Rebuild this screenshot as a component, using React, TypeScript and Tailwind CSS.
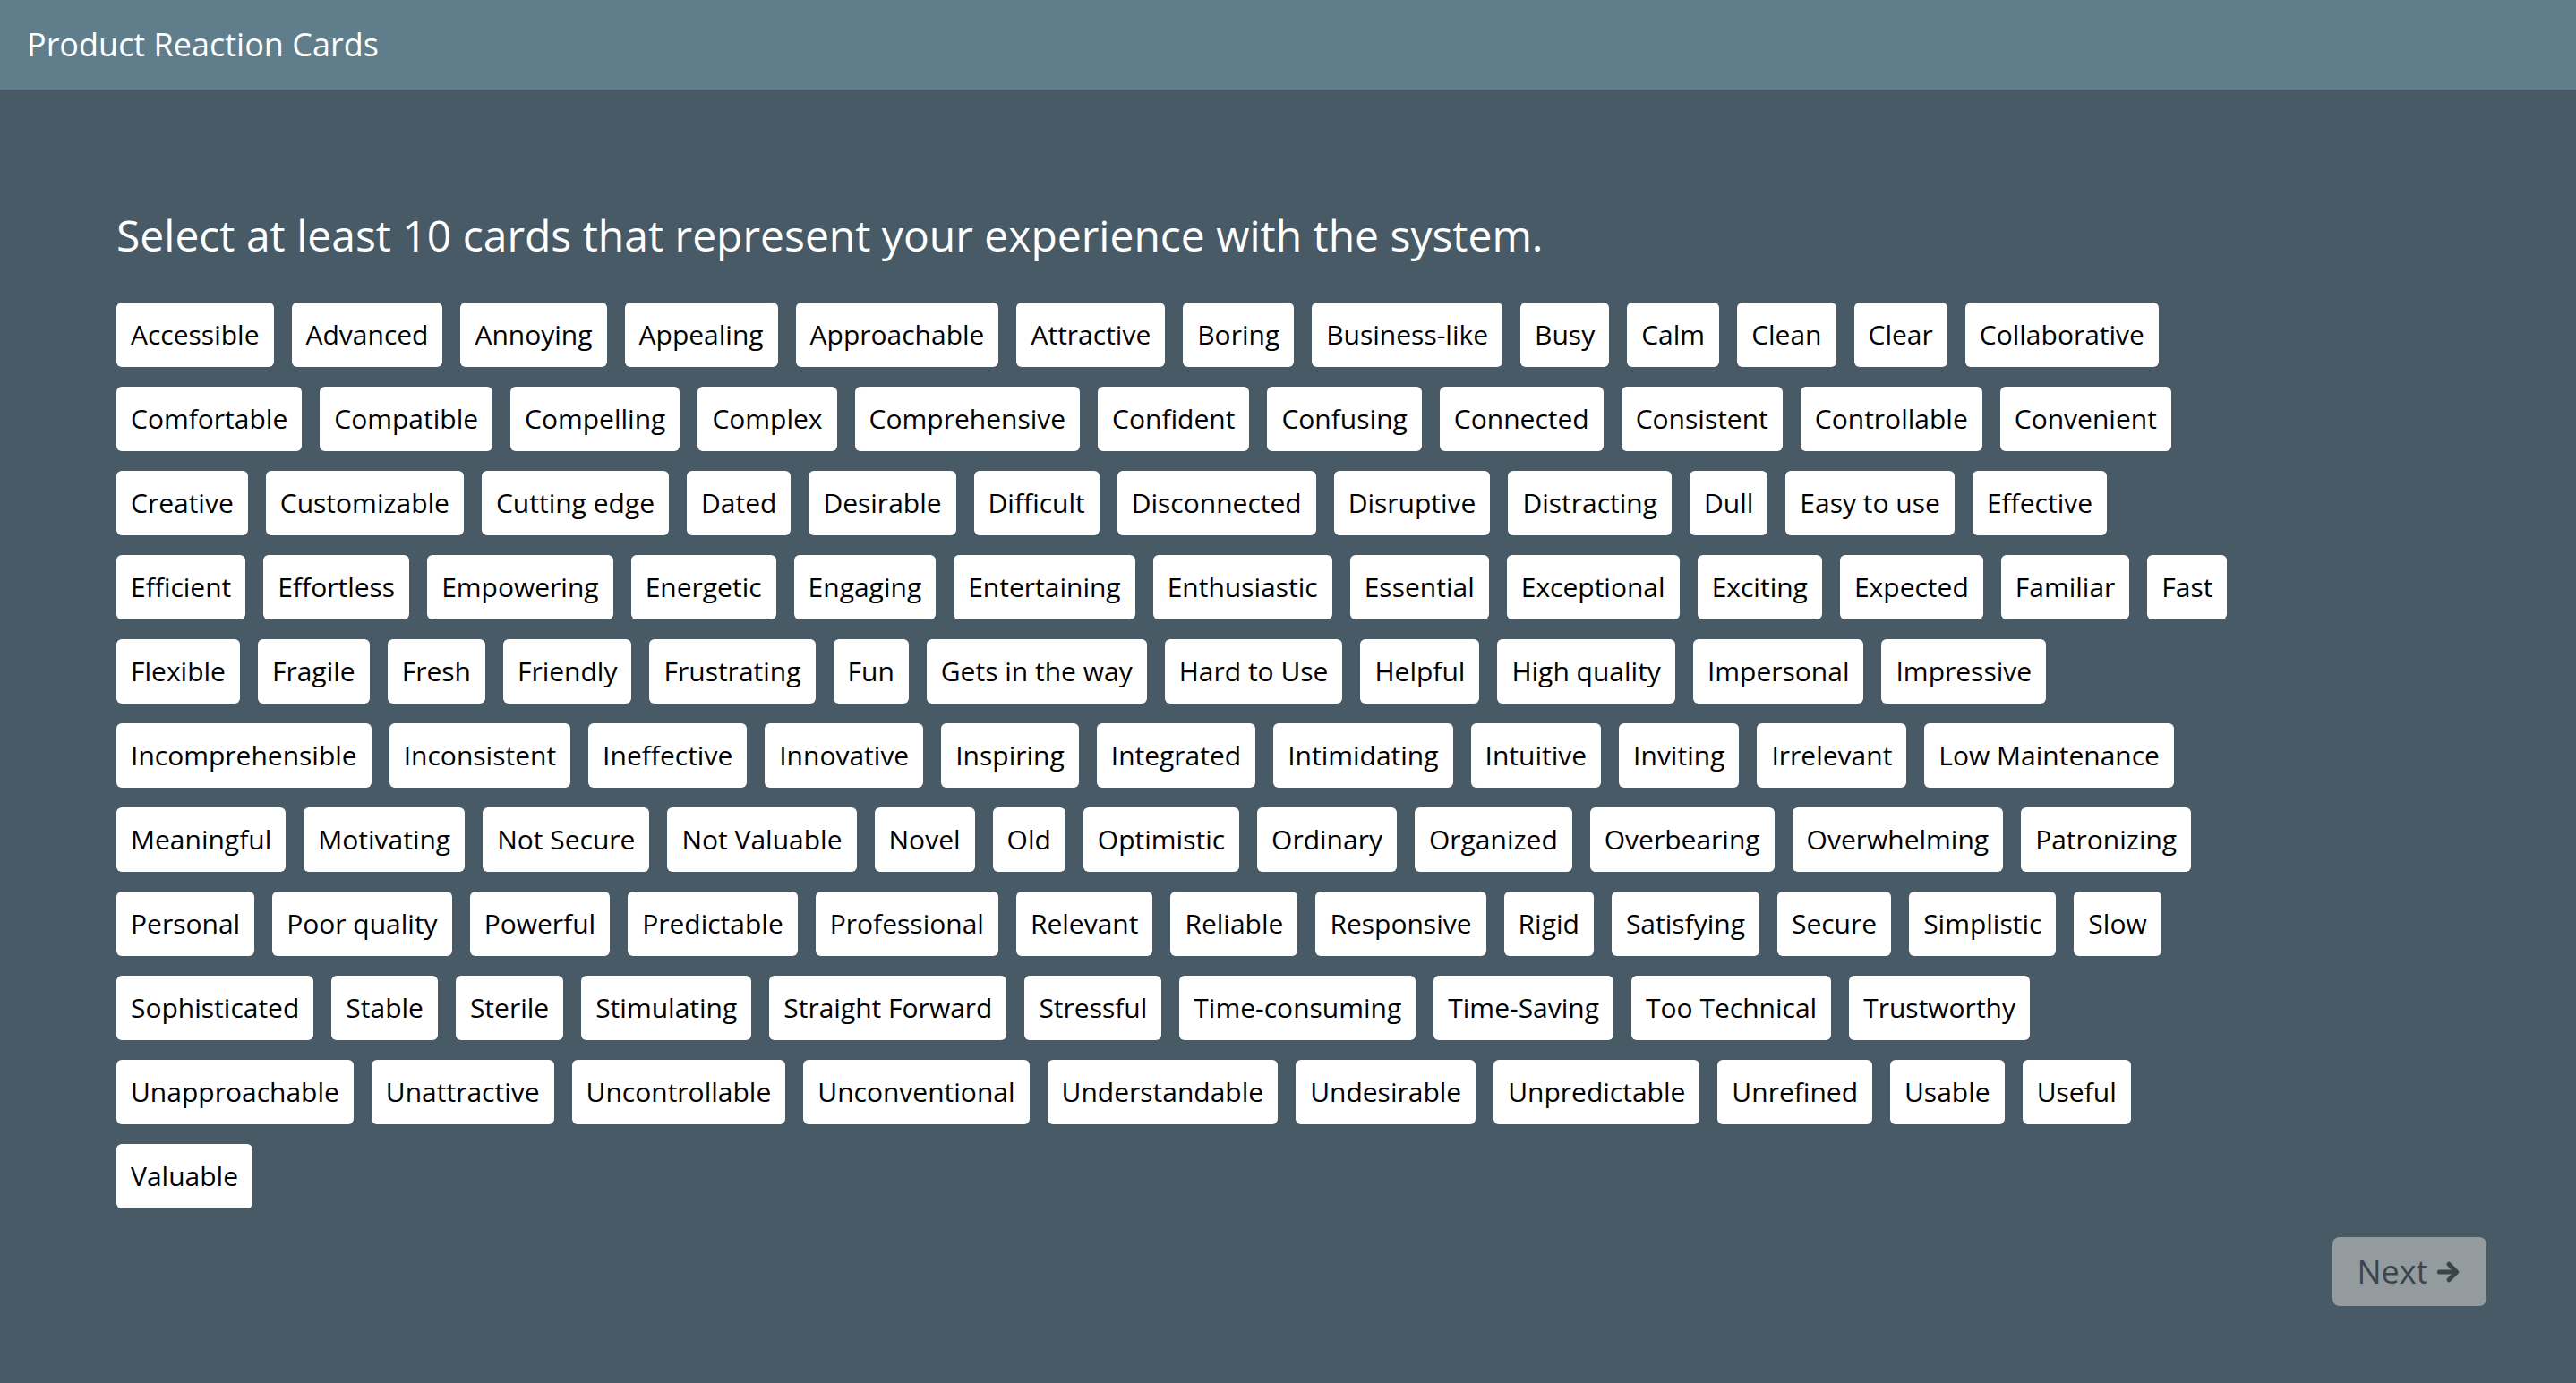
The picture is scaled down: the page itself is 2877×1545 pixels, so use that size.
const cardRows: string[][] = [
  ["Accessible", "Advanced", "Annoying", "Appealing", "Approachable", "Attractive", "Boring", "Business-like", "Busy", "Calm", "Clean", "Clear", "Collaborative"],
  ["Comfortable", "Compatible", "Compelling", "Complex", "Comprehensive", "Confident", "Confusing", "Connected", "Consistent", "Controllable", "Convenient"],
  ["Creative", "Customizable", "Cutting edge", "Dated", "Desirable", "Difficult", "Disconnected", "Disruptive", "Distracting", "Dull", "Easy to use", "Effective"],
  ["Efficient", "Effortless", "Empowering", "Energetic", "Engaging", "Entertaining", "Enthusiastic", "Essential", "Exceptional", "Exciting", "Expected", "Familiar", "Fast"],
  ["Flexible", "Fragile", "Fresh", "Friendly", "Frustrating", "Fun", "Gets in the way", "Hard to Use", "Helpful", "High quality", "Impersonal", "Impressive"],
  ["Incomprehensible", "Inconsistent", "Ineffective", "Innovative", "Inspiring", "Integrated", "Intimidating", "Intuitive", "Inviting", "Irrelevant", "Low Maintenance"],
  ["Meaningful", "Motivating", "Not Secure", "Not Valuable", "Novel", "Old", "Optimistic", "Ordinary", "Organized", "Overbearing", "Overwhelming", "Patronizing"],
  ["Personal", "Poor quality", "Powerful", "Predictable", "Professional", "Relevant", "Reliable", "Responsive", "Rigid", "Satisfying", "Secure", "Simplistic", "Slow"],
  ["Sophisticated", "Stable", "Sterile", "Stimulating", "Straight Forward", "Stressful", "Time-consuming", "Time-Saving", "Too Technical", "Trustworthy"],
  ["Unapproachable", "Unattractive", "Uncontrollable", "Unconventional", "Understandable", "Undesirable", "Unpredictable", "Unrefined", "Usable", "Useful"],
  ["Valuable"],
];

function ArrowIcon() {
  return (
    <svg width="30" height="30" viewBox="0 0 24 24" fill="none" stroke="currentColor" strokeWidth="4" strokeLinecap="round" strokeLinejoin="round">
      <path d="M3.5 12h15" />
      <path d="M12 5l7 7-7 7" />
    </svg>
  );
}

export default function App() {
  return (
    <div className="min-h-screen bg-[#485a65] font-['Open_Sans',sans-serif]">
      {/* Top bar */}
      <header className="h-[100px] bg-[#607d8b] flex items-center pl-[30px]">
        <h1 className="text-[36px] text-white leading-none">Product Reaction Cards</h1>
      </header>

      <main className="pl-[130px] pr-[100px] pt-[135px] pb-[40px]">
        <h2 className="text-[48px] leading-[56px] text-white">
          Select at least 10 cards that represent your experience with the system.
        </h2>

        <div className="mt-[47px] flex flex-col gap-[22px]">
          {cardRows.map((row, i) => (
            <div key={i} className="flex gap-[20px]">
              {row.map((card) => (
                <button
                  key={card}
                  className="h-[72px] px-[16px] bg-white rounded-[6px] text-[30px] leading-[42px] text-black whitespace-nowrap"
                >
                  {card}
                </button>
              ))}
            </div>
          ))}
        </div>

        <div className="mt-[32px] flex justify-end">
          <button className="h-[77px] w-[172px] rounded-[8px] bg-[#939b9f] text-[#3b4549] text-[36px] flex items-center justify-center gap-[8px]">
            <span className="leading-none">Next</span>
            <ArrowIcon />
          </button>
        </div>
      </main>
    </div>
  );
}
